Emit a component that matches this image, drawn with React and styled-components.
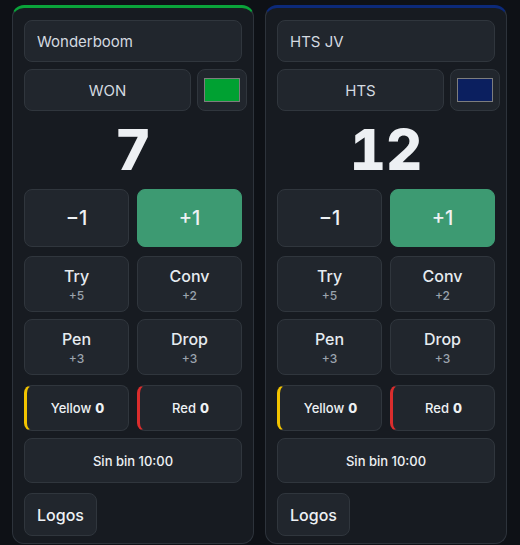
import React from "react";
import styled, { createGlobalStyle } from "styled-components";

const Global = createGlobalStyle`
  html, body { margin: 0; padding: 0; background: #0e1116; }
  body { font-family: Inter, "Noto Sans", sans-serif; color: #e6edf3; }
  * { box-sizing: border-box; }
`;

const Board = styled.div`
  display: grid;
  grid-template-columns: 242px 242px;
  column-gap: 11px;
  padding: 5px 0 0 12px;
  height: 545px;
  overflow: hidden;
`;

const Panel = styled.section`
  display: flex;
  flex-direction: column;
  background: #171b21;
  border: 1px solid #2d333b;
  border-top: 3px solid ${(p) => p.$color};
  border-radius: 12px;
  padding: 12px 11px 7px 11px;
  height: 539px;
`;

const NameInput = styled.input`
  height: 42px;
  width: 100%;
  background: #21262d;
  border: 1px solid #30363d;
  border-radius: 8px;
  padding: 0 12px;
  font-family: inherit;
  font-size: 15px;
  color: #d4dae0;
  outline: none;
`;

const AbbrRow = styled.div`
  display: grid;
  grid-template-columns: 1fr 50px;
  column-gap: 6px;
  margin-top: 7px;
  width: calc(100% + 5px);
`;

const AbbrInput = styled(NameInput)`
  text-align: center;
`;

const ColorBox = styled.button`
  height: 42px;
  background: #21262d;
  border: 1px solid #30363d;
  border-radius: 8px;
  padding: 8px 0 0 6px;
  display: flex;
  align-items: flex-start;
`;

const Swatch = styled.span`
  display: block;
  width: 36px;
  height: 24px;
  background: ${(p) => p.$color};
  border: 1px solid #7d7d7d;
`;

const Score = styled.div`
  height: 78px;
  line-height: 78px;
  text-align: center;
  font-size: 56px;
  font-weight: 800;
  font-variant-numeric: tabular-nums;
  color: #edf0f3;
`;

const Grid2 = styled.div`
  display: grid;
  grid-template-columns: 1fr 1fr;
  column-gap: 8px;
  margin-top: ${(p) => p.$mt || 0}px;
`;

const Btn = styled.button`
  height: ${(p) => p.$h}px;
  background: ${(p) => (p.$primary ? "#3d9a72" : "#21262d")};
  border: 1px solid ${(p) => (p.$primary ? "#3d9a72" : "#30363d")};
  border-left: ${(p) => (p.$accent ? `3px solid ${p.$accent}` : undefined)};
  border-radius: 8px;
  color: #eef1f4;
  font-family: inherit;
  font-size: ${(p) => p.$fs || 16}px;
  font-weight: ${(p) => p.$fw || 500};
  display: flex;
  flex-direction: column;
  align-items: center;
  justify-content: center;
  padding: 0;
  margin-top: ${(p) => p.$mt || 0}px;
  cursor: pointer;
`;

const Label = styled.span`
  font-size: 16px;
  font-weight: 500;
  line-height: 20px;
  color: #e6ebf0;
`;

const Sub = styled.span`
  font-size: 12px;
  line-height: 15px;
  color: #9aa3ad;
  margin-top: 2px;
`;

const Count = styled.b`
  font-weight: 800;
  margin-left: 4px;
`;

const CardLine = styled.span`
  display: flex;
  align-items: center;
`;

const LogosBtn = styled(Btn)`
  width: 73px;
  align-self: flex-start;
`;

const TeamPanel = ({ name, abbr, color, swatch, score }) => (
  <Panel $color={color}>
    <NameInput defaultValue={name} />
    <AbbrRow>
      <AbbrInput defaultValue={abbr} />
      <ColorBox>
        <Swatch $color={swatch} />
      </ColorBox>
    </AbbrRow>
    <Score>{score}</Score>
    <Grid2>
      <Btn $h={58} $fs={20}>−1</Btn>
      <Btn $h={58} $fs={20} $primary>+1</Btn>
    </Grid2>
    <Grid2 $mt={9}>
      <Btn $h={56}>
        <Label>Try</Label>
        <Sub>+5</Sub>
      </Btn>
      <Btn $h={56}>
        <Label>Conv</Label>
        <Sub>+2</Sub>
      </Btn>
    </Grid2>
    <Grid2 $mt={7}>
      <Btn $h={56}>
        <Label>Pen</Label>
        <Sub>+3</Sub>
      </Btn>
      <Btn $h={56}>
        <Label>Drop</Label>
        <Sub>+3</Sub>
      </Btn>
    </Grid2>
    <Grid2 $mt={10}>
      <Btn $h={46} $fs={13} $fw={500} $accent="#f2c300">
        <CardLine>
          Yellow<Count>0</Count>
        </CardLine>
      </Btn>
      <Btn $h={46} $fs={13} $fw={500} $accent="#da2d2d">
        <CardLine>
          Red<Count>0</Count>
        </CardLine>
      </Btn>
    </Grid2>
    <Btn $h={45} $fs={13} $fw={500} $mt={7}>
      Sin bin 10:00
    </Btn>
    <LogosBtn $h={43} $fs={16} $fw={500} $mt={10}>
      Logos
    </LogosBtn>
  </Panel>
);

export default function App() {
  return (
    <>
      <Global />
      <Board>
        <TeamPanel name="Wonderboom" abbr="WON" color="#0aa33a" swatch="#00a132" score={7} />
        <TeamPanel name="HTS JV" abbr="HTS" color="#0c2a7a" swatch="#0b1f5f" score={12} />
      </Board>
    </>
  );
}
